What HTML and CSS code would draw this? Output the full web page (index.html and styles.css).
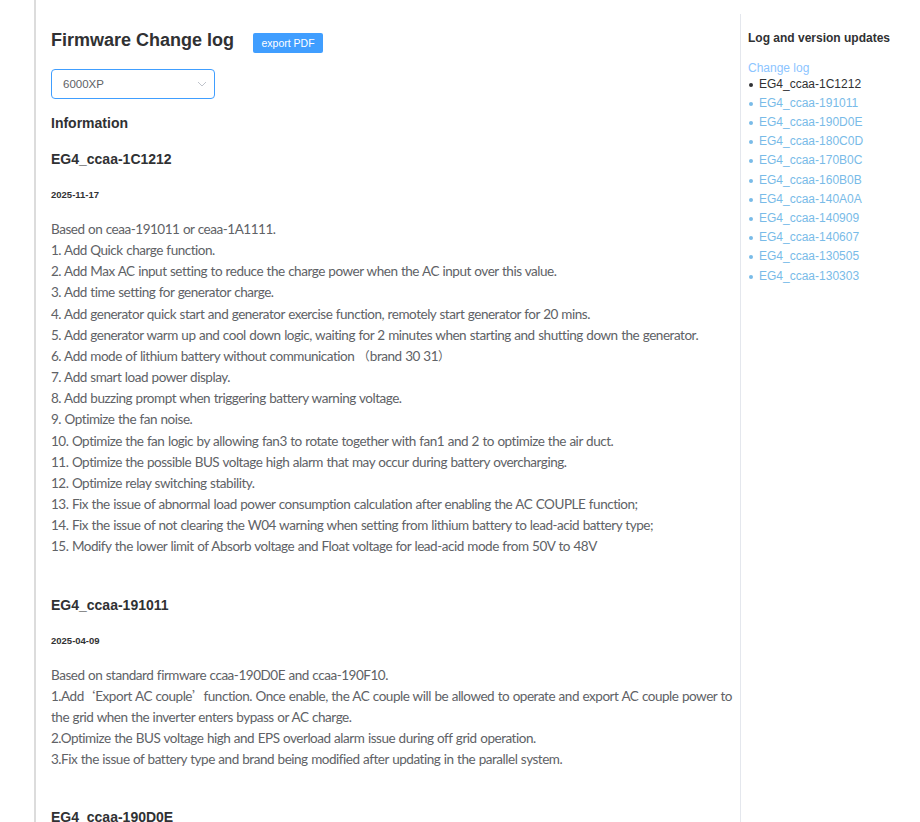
FILE: index.html
```html
<!DOCTYPE html>
<html>
<head>
<meta charset="utf-8">
<link rel="stylesheet" href="styles.css">
</head>
<body>
<div class="page">
  <div class="main">
    <div class="title-row">
      <h1 class="title">Firmware Change log</h1>
      <button class="btn-export">export PDF</button>
    </div>
    <div class="select">
      <span class="select-value">6000XP</span>
      <svg class="chevron" width="10" height="6" viewBox="0 0 10 6"><path d="M1 1 L5 5 L9 1" fill="none" stroke="#c0c4cc" stroke-width="1"/></svg>
    </div>
    <h2 class="info">Information</h2>

    <section class="entry">
      <h3 class="ver">EG4_ccaa-1C1212</h3>
      <div class="date">2025-11-17</div>
      <div class="body">
        <p>Based on ceaa-191011 or ceaa-1A1111.</p>
        <p>1. Add Quick charge function.</p>
        <p>2. Add Max AC input setting to reduce the charge power when the AC input over this value.</p>
        <p>3. Add time setting for generator charge.</p>
        <p>4. Add generator quick start and generator exercise function, remotely start generator for 20 mins.</p>
        <p>5. Add generator warm up and cool down logic, waiting for 2 minutes when starting and shutting down the generator.</p>
        <p>6. Add mode of lithium battery without communication <span class="cjk">（</span>brand 30 31<span class="cjk">）</span></p>
        <p>7. Add smart load power display.</p>
        <p>8. Add buzzing prompt when triggering battery warning voltage.</p>
        <p>9. Optimize the fan noise.</p>
        <p>10. Optimize the fan logic by allowing fan3 to rotate together with fan1 and 2 to optimize the air duct.</p>
        <p>11. Optimize the possible BUS voltage high alarm that may occur during battery overcharging.</p>
        <p>12. Optimize relay switching stability.</p>
        <p>13. Fix the issue of abnormal load power consumption calculation after enabling the AC COUPLE function;</p>
        <p>14. Fix the issue of not clearing the W04 warning when setting from lithium battery to lead-acid battery type;</p>
        <p>15. Modify the lower limit of Absorb voltage and Float voltage for lead-acid mode from 50V to 48V</p>
      </div>
    </section>

    <section class="entry">
      <h3 class="ver">EG4_ccaa-191011</h3>
      <div class="date">2025-04-09</div>
      <div class="body">
        <p>Based on standard firmware ccaa-190D0E and ccaa-190F10.</p>
        <p>1.Add <span class="cjk ql">‘</span>Export AC couple<span class="cjk qr">’</span> function. Once enable, the AC couple will be allowed to operate and export AC couple power to the grid when the inverter enters bypass or AC charge.</p>
        <p>2.Optimize the BUS voltage high and EPS overload alarm issue during off grid operation.</p>
        <p>3.Fix the issue of battery type and brand being modified after updating in the parallel system.</p>
      </div>
    </section>

    <section class="entry">
      <h3 class="ver">EG4_ccaa-190D0E</h3>
    </section>
  </div>

  <aside class="sidebar">
    <div class="side-title">Log and version updates</div>
    <div class="side-head">Change log</div>
    <ul class="side-list">
      <li class="active">EG4_ccaa-1C1212</li>
      <li>EG4_ccaa-191011</li>
      <li>EG4_ccaa-190D0E</li>
      <li>EG4_ccaa-180C0D</li>
      <li>EG4_ccaa-170B0C</li>
      <li>EG4_ccaa-160B0B</li>
      <li>EG4_ccaa-140A0A</li>
      <li>EG4_ccaa-140909</li>
      <li>EG4_ccaa-140607</li>
      <li>EG4_ccaa-130505</li>
      <li>EG4_ccaa-130303</li>
    </ul>
  </aside>
</div>
</body>
</html>
```

FILE: styles.css
```css
html, body {
  margin: 0;
  padding: 0;
  background: #fff;
  height: 100%;
  overflow: hidden;
}
body {
  font-family: "Liberation Sans", Arial, sans-serif;
  color: #303133;
}
.page {
  display: flex;
  height: 822px;
}
.main {
  margin-left: 34px;
  border-left: 2px solid #dcdcdc;
  padding-left: 15px;
  width: 689px;
  padding-top: 28px;
  flex: none;
}
.title-row {
  display: flex;
  align-items: flex-start;
  gap: 19px;
}
.title {
  margin: 0;
  font-size: 18px;
  font-weight: bold;
  color: #303133;
  line-height: 24px;
}
.btn-export {
  background: #409eff;
  color: #fff;
  border: none;
  border-radius: 2px;
  font-family: "Liberation Sans", Arial, sans-serif;
  font-size: 10.5px;
  width: 70px;
  height: 20px;
  padding: 0;
  margin-top: 5px;
}
.select {
  margin-top: 16px;
  height: 28px;
  border: 1px solid #409eff;
  border-radius: 4px;
  display: flex;
  align-items: center;
  justify-content: space-between;
  padding: 0 7px 0 11px;
  box-sizing: content-box;
  width: 144px;
}
.select-value {
  font-size: 11.5px;
  color: #606266;
}
.info {
  margin: 15px 0 0 0;
  font-size: 14px;
  line-height: 18px;
  font-weight: bold;
  color: #303133;
}
.entry {
  padding-top: 18px;
}
.entry + .entry {
  padding-top: 38px;
}
.ver {
  margin: 0;
  font-size: 14px;
  line-height: 18px;
  font-weight: bold;
  color: #303133;
}
.date {
  margin-top: 21px;
  font-size: 9.5px;
  line-height: 12px;
  font-weight: bold;
  color: #303133;
}
.body {
  margin-top: 18px;
  font-family: "Lato", "Noto Sans", sans-serif;
  font-size: 13.5px;
  letter-spacing: -0.47px;
  word-spacing: 0.5px;
  line-height: 21.15px;
  color: #606266;
  width: 690px;
}
.body p {
  margin: 0;
}
.cjk {
  font-family: "Noto Sans CJK SC", sans-serif;
  font-size: 12px;
  letter-spacing: 0;
  line-height: 1;
}
.ql {
  margin-left: -4px;
}
.qr {
  margin-right: -4px;
}
.sidebar {
  margin-top: 14px;
  border-left: 1px solid #e4e7ed;
  padding-left: 7px;
  flex: 1;
}
.side-title {
  margin-top: 17px;
  font-size: 12px;
  font-weight: bold;
  line-height: 15px;
  color: #303133;
}
.side-head {
  margin-top: 15px;
  font-size: 12px;
  line-height: 15px;
  color: #8cc5ff;
}
.side-list {
  list-style: none;
  margin: -1.5px 0 0;
  padding: 0;
}
.side-list li {
  position: relative;
  padding-left: 11px;
  font-size: 12px;
  line-height: 19.2px;
  color: #79bbe8;
}
.side-list li::before {
  content: "";
  position: absolute;
  left: 1px;
  top: 8px;
  width: 4px;
  height: 4px;
  border-radius: 50%;
  background: #79bbe8;
}
.side-list li.active {
  color: #303133;
}
.side-list li.active::before {
  background: #303133;
}
```
